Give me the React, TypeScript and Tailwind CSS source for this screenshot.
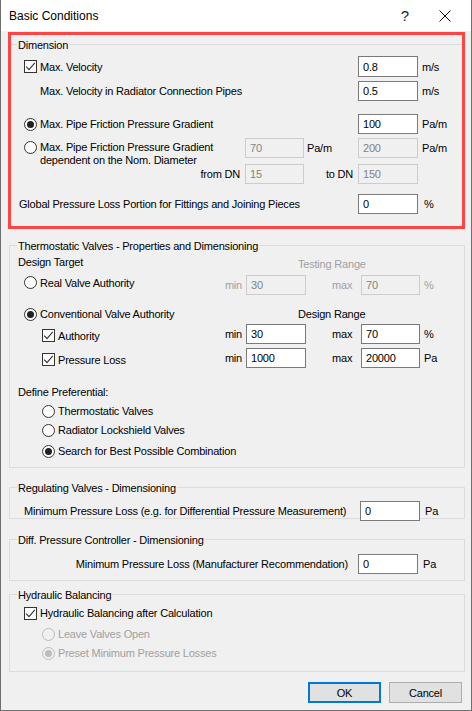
import React from "react";

function Inp({ value, disabled, w = "w-[60px]", h = "h-[20px]" }: { value: string; disabled?: boolean; w?: string; h?: string }) {
  return (
    <div
      className={`${w} ${h} shrink-0 border flex items-center pl-[4px] relative ${
        disabled ? "border-[#cccccc] bg-[#f0f0f0] text-[#838383]" : "border-[#7a7a7a] bg-white text-black"
      }`}
    >
      {value}
    </div>
  );
}

function Chk({ checked = true }: { checked?: boolean }) {
  return (
    <span className="w-[13px] h-[13px] shrink-0 border border-[#333333] bg-white flex items-center justify-center">
      {checked && (
        <svg width="11" height="11" viewBox="0 0 11 11">
          <path d="M1.2 5.6 L4 8.6 L9.8 1.8" stroke="#333333" strokeWidth="1.1" fill="none" />
        </svg>
      )}
    </span>
  );
}

function Radio({ checked, disabled }: { checked?: boolean; disabled?: boolean }) {
  return (
    <span
      className={`w-[13px] h-[13px] shrink-0 rounded-full border flex items-center justify-center ${
        disabled ? "border-[#bcbcbc] bg-[#f0f0f0]" : "border-[#333333] bg-white"
      }`}
    >
      {checked && <span className={`w-[7px] h-[7px] rounded-full ${disabled ? "bg-[#bcbcbc]" : "bg-[#222222]"}`} />}
    </span>
  );
}

function Group({ label, className, children }: { label: string; className: string; children?: React.ReactNode }) {
  return (
    <div className={`relative border border-[#dcdcdc] flex flex-col shrink-0 ${className}`}>
      <span className="absolute left-[7px] top-[-8px] bg-[#f0f0f0] px-[1px] leading-[16px] whitespace-nowrap">{label}</span>
      {children}
    </div>
  );
}

export default function App() {
  const gray = "text-[#a0a0a0]";
  return (
    <div className="w-[472px] h-[711px] bg-[#f0f0f0] border-x border-b border-[#6f6f6f] relative overflow-hidden flex flex-col font-['Liberation_Sans',Arial,sans-serif] text-[11px] tracking-[-0.2px] leading-[16px] text-black">
      {/* Title bar */}
      <div className="h-[31px] shrink-0 bg-white flex items-center pl-[8px] text-[12px] tracking-normal">
        <span className="flex-1">Basic Conditions</span>
        <span className="text-[15px] mr-[30px] text-[#222222]">?</span>
        <svg width="12" height="12" viewBox="0 0 12 12" className="mr-[20px]">
          <path d="M0.5 0.5 L11.5 11.5 M11.5 0.5 L0.5 11.5" stroke="#111111" strokeWidth="1" />
        </svg>
      </div>

      {/* Body */}
      <div className="flex flex-col pl-[8px] pr-[6px]">
        {/* Dimension */}
        <Group label="Dimension" className="mt-[13px] h-[185px]">
          <div className="flex items-center h-[21px] mt-[11px]">
            <div className="w-[348px] flex items-center pl-[14px]">
              <Chk />
              <span className="ml-[3px]">Max. Velocity</span>
            </div>
            <Inp value="0.8" h="h-[21px]" />
            <span className="ml-[4px]">m/s</span>
          </div>
          <div className="flex items-center h-[20px] mt-[4px]">
            <div className="w-[348px] pl-[30px]">Max. Velocity in Radiator Connection Pipes</div>
            <Inp value="0.5" />
            <span className="ml-[4px]">m/s</span>
          </div>
          <div className="flex items-center h-[20px] mt-[13px]">
            <div className="w-[348px] flex items-center pl-[14px]">
              <Radio checked />
              <span className="ml-[3px]">Max. Pipe Friction Pressure Gradient</span>
            </div>
            <Inp value="100" />
            <span className="ml-[4px]">Pa/m</span>
          </div>
          <div className="grid grid-cols-[235px_59px_54px_60px_1fr] grid-rows-[20px_20px] gap-y-[6px] mt-[4px]">
            <div className="flex items-start pl-[14px] pt-[3px]">
              <Radio />
              <div className="ml-[3px] leading-[13px] whitespace-nowrap">
                Max. Pipe Friction Pressure Gradient
                <br />
                dependent on the Nom. Diameter
              </div>
            </div>
            <Inp value="70" disabled w="w-[59px]" />
            <div className="flex items-center pl-[3px]">Pa/m</div>
            <Inp value="200" disabled />
            <div className="flex items-center pl-[4px]">Pa/m</div>
            <div className="flex items-center justify-end pr-[5px]">from DN</div>
            <Inp value="15" disabled w="w-[59px]" />
            <div className="flex items-center justify-end pr-[5px]">to DN</div>
            <Inp value="150" disabled />
            <div />
          </div>
          <div className="flex items-center h-[20px] mt-[10px]">
            <div className="w-[348px] pl-[9px]">Global Pressure Loss Portion for Fittings and Joining Pieces</div>
            <Inp value="0" />
            <span className="ml-[6px]">%</span>
          </div>
        </Group>

        {/* Thermostatic Valves */}
        <Group label="Thermostatic Valves - Properties and Dimensioning" className="mt-[16px] h-[223px]">
          <div className="flex items-start h-[16px] mt-[8px]">
            <div className="w-[288px] pl-[8px]">Design Target</div>
            <div className={`mt-[2px] ${gray}`}>Testing Range</div>
          </div>
          <div className="flex items-center h-[20px] mt-[5px]">
            <div className="w-[236px] flex items-center justify-between pl-[14px] pr-[4px]">
              <div className="flex items-center mb-[5px]">
                <Radio />
                <span className="ml-[3px]">Real Valve Authority</span>
              </div>
              <span className={gray}>min</span>
            </div>
            <Inp value="30" disabled />
            <div className={`w-[55px] pl-[26px] ${gray}`}>max</div>
            <Inp value="70" disabled w="w-[59px]" />
            <span className={`ml-[4px] ${gray}`}>%</span>
          </div>
          <div className="flex items-center h-[16px] mt-[11px]">
            <div className="w-[288px] flex items-center pl-[14px]">
              <Radio checked />
              <span className="ml-[3px]">Conventional Valve Authority</span>
            </div>
            <div>Design Range</div>
          </div>
          <div className="flex items-center h-[20px] mt-[2px]">
            <div className="w-[236px] flex items-center justify-between pl-[32px] pr-[4px]">
              <div className="flex items-center mt-[3px]">
                <Chk />
                <span className="ml-[3px]">Authority</span>
              </div>
              <span>min</span>
            </div>
            <Inp value="30" />
            <div className="w-[55px] pl-[26px]">max</div>
            <Inp value="70" w="w-[59px]" />
            <span className="ml-[4px]">%</span>
          </div>
          <div className="flex items-center h-[20px] mt-[4px]">
            <div className="w-[236px] flex items-center justify-between pl-[32px] pr-[4px]">
              <div className="flex items-center mt-[3px]">
                <Chk />
                <span className="ml-[3px]">Pressure Loss</span>
              </div>
              <span>min</span>
            </div>
            <Inp value="1000" />
            <div className="w-[55px] pl-[26px]">max</div>
            <Inp value="20000" w="w-[59px]" />
            <span className="ml-[4px]">Pa</span>
          </div>
          <div className="h-[16px] mt-[16px] pl-[8px]">Define Preferential:</div>
          <div className="flex items-center h-[16px] mt-[3px] pl-[32px]">
            <Radio />
            <span className="ml-[3px]">Thermostatic Valves</span>
          </div>
          <div className="flex items-center h-[16px] mt-[3px] pl-[32px]">
            <Radio />
            <span className="ml-[3px]">Radiator Lockshield Valves</span>
          </div>
          <div className="flex items-center h-[16px] mt-[5px] pl-[32px]">
            <Radio checked />
            <span className="ml-[3px]">Search for Best Possible Combination</span>
          </div>
        </Group>

        {/* Regulating Valves */}
        <Group label="Regulating Valves - Dimensioning" className="mt-[19px] h-[32px]">
          <div className="flex items-center h-[20px] mt-[13px]">
            <div className="w-[350px] pl-[14px] whitespace-nowrap">Minimum Pressure Loss (e.g. for Differential Pressure Measurement)</div>
            <Inp value="0" />
            <span className="ml-[5px]">Pa</span>
          </div>
        </Group>

        {/* Diff. Pressure Controller */}
        <Group label="Diff. Pressure Controller - Dimensioning" className="mt-[20px] h-[42px]">
          <div className="flex items-center h-[20px] mt-[14px]">
            <div className="w-[348px] flex justify-end pr-[10px] whitespace-nowrap">Minimum Pressure Loss (Manufacturer Recommendation)</div>
            <Inp value="0" />
            <span className="ml-[5px]">Pa</span>
          </div>
        </Group>

        {/* Hydraulic Balancing */}
        <Group label="Hydraulic Balancing" className="mt-[13px] h-[78px]">
          <div className="flex items-center h-[16px] mt-[10px] pl-[14px]">
            <Chk />
            <span className="ml-[3px]">Hydraulic Balancing after Calculation</span>
          </div>
          <div className="flex items-center h-[16px] mt-[5px] pl-[32px]">
            <Radio disabled />
            <span className={`ml-[3px] ${gray}`}>Leave Valves Open</span>
          </div>
          <div className="flex items-center h-[16px] mt-[3px] pl-[32px]">
            <Radio checked disabled />
            <span className={`ml-[3px] ${gray}`}>Preset Minimum Pressure Losses</span>
          </div>
        </Group>

        {/* Buttons */}
        <div className="flex justify-end gap-[8px] mt-[10px] pr-[3px]">
          <button className="w-[73px] h-[21px] border-2 border-[#0078d7] bg-[#e1e1e1] flex items-center justify-center">OK</button>
          <button className="w-[73px] h-[21px] border border-[#adadad] bg-[#e1e1e1] flex items-center justify-center">Cancel</button>
        </div>
      </div>

      {/* Red highlight annotation */}
      <div className="absolute left-[7px] top-[32px] w-[457px] h-[197px] border-[3px] border-[#ff4444] pointer-events-none" />
    </div>
  );
}
